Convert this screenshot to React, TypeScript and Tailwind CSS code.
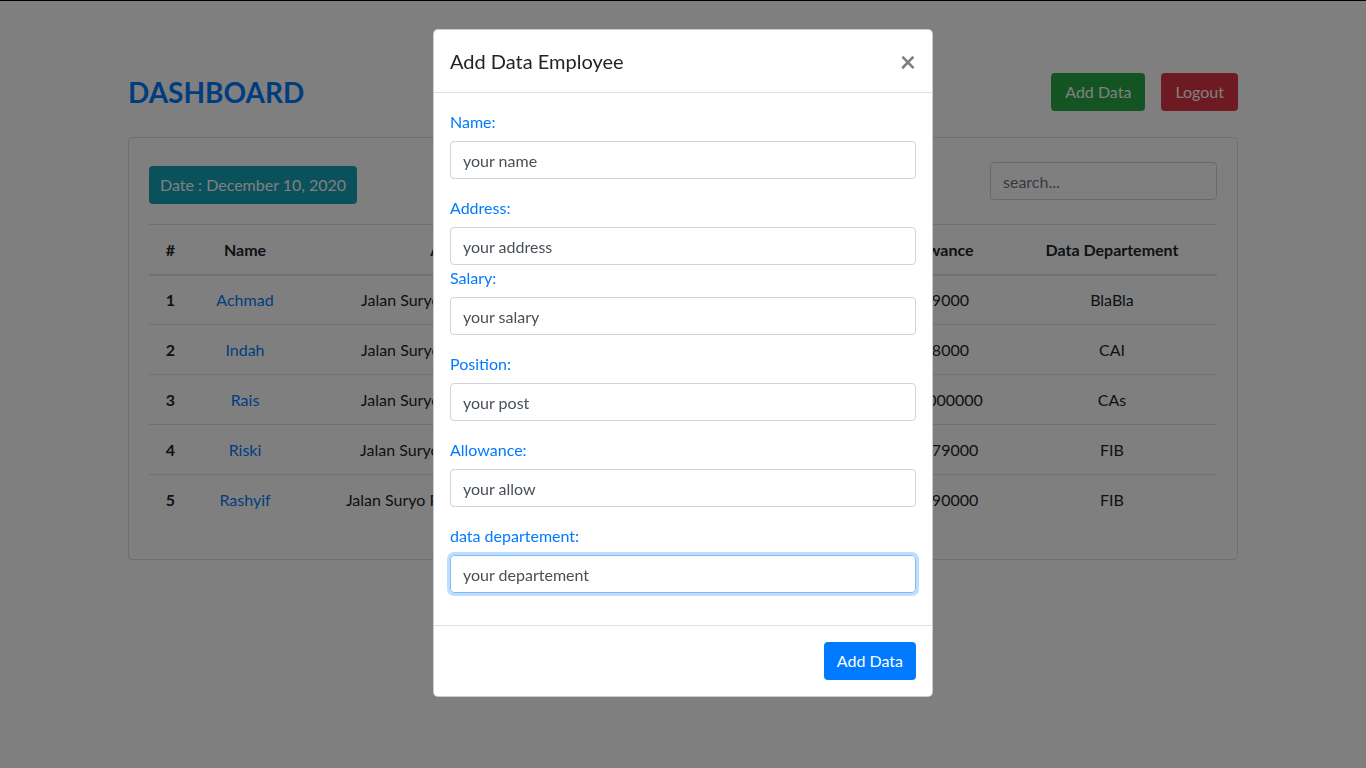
import { useState } from "react";

interface Employee {
  id: number;
  name: string;
  address: string;
  salary: string;
  position: string;
  allowance: string;
  dept: string;
}

const employees: Employee[] = [
  { id: 1, name: "Achmad", address: "Jalan Suryo No. 12 Blok A-2", salary: "5000000", position: "Manager", allowance: "1299000", dept: "BlaBla" },
  { id: 2, name: "Indah", address: "Jalan Suryo No. 14 Blok B-2", salary: "4500000", position: "Staff", allowance: "1298000", dept: "CAI" },
  { id: 3, name: "Rais", address: "Jalan Suryo No. 16 Blok C-2", salary: "4000000", position: "Staff", allowance: "1000000000", dept: "CAs" },
  { id: 4, name: "Riski", address: "Jalan Suryo No. 18 Blok D-2", salary: "3500000", position: "Admin", allowance: "117979000", dept: "FIB" },
  { id: 5, name: "Rashyif", address: "Jalan Suryo Pranoto No. 20 Blok", salary: "3000000", position: "Admin", allowance: "119890000", dept: "FIB" },
];

const fields = [
  { label: "Name:", placeholder: "your name", gap: true },
  { label: "Address:", placeholder: "your address", gap: false },
  { label: "Salary:", placeholder: "your salary", gap: true },
  { label: "Position:", placeholder: "your post", gap: true },
  { label: "Allowance:", placeholder: "your allow", gap: true },
  { label: "data departement:", placeholder: "your departement", gap: true, focus: true },
];

const App = () => {
  const [search, setSearch] = useState("");

  return (
    <div className="min-h-screen bg-white border-t border-black font-['Lato',sans-serif] text-[16px] text-[#212529]">
      <div className="mx-auto w-[1140px] px-[15px]">
        <div className="mt-[72px] flex h-[38px] items-center justify-between">
          <h2 className="text-[28px] font-bold text-[#007bff] leading-none">DASHBOARD</h2>
          <div className="flex gap-4">
            <button className="h-[38px] rounded px-[14px] bg-[#28a745] text-white">Add Data</button>
            <button className="h-[38px] rounded px-[14px] bg-[#dc3545] text-white">Logout</button>
          </div>
        </div>

        <div className="mt-[26px] rounded border border-black/[0.125] px-5 pt-6 pb-[18px]">
          <div className="flex items-start justify-between">
            <div className="mt-1 flex h-[38px] items-center rounded bg-[#17a2b8] px-[11px] text-white">
              Date : December 10, 2020
            </div>
            <input
              value={search}
              onChange={(e) => setSearch(e.target.value)}
              placeholder="search..."
              className="h-[38px] w-[227px] rounded border border-[#ced4da] px-3 text-[#495057] placeholder:text-[#6c757d] outline-none"
            />
          </div>

          <table className="mt-5 mb-4 w-full table-fixed border-collapse text-center">
            <colgroup>
              <col className="w-[43px]" />
              <col className="w-[106px]" />
              <col className="w-[322px]" />
              <col className="w-[123px]" />
              <col className="w-[123px]" />
              <col className="w-[141px]" />
              <col className="w-[210px]" />
            </colgroup>
            <thead>
              <tr className="h-[50px] border-t border-[#dee2e6] border-b-2">
                <th className="px-3 pt-[2px] font-bold">#</th>
                <th className="px-3 pt-[2px] font-bold">Name</th>
                <th className="px-3 pt-[2px] font-bold">Address</th>
                <th className="px-3 pt-[2px] font-bold">Salary</th>
                <th className="px-3 pt-[2px] font-bold">Position</th>
                <th className="px-3 pt-[2px] font-bold">Allowance</th>
                <th className="px-3 pt-[2px] font-bold">Data Departement</th>
              </tr>
            </thead>
            <tbody>
              {employees.map((emp) => (
                <tr key={emp.id} className="h-[50px] border-t border-[#dee2e6]">
                  <th className="px-3 font-bold">{emp.id}</th>
                  <td className="px-3 text-[#007bff]">{emp.name}</td>
                  <td className="px-3 whitespace-nowrap">{emp.address}</td>
                  <td className="px-3">{emp.salary}</td>
                  <td className="px-3">{emp.position}</td>
                  <td className="px-3">{emp.allowance}</td>
                  <td className="px-3">{emp.dept}</td>
                </tr>
              ))}
            </tbody>
          </table>
        </div>
      </div>

      {/* modal */}
      <div className="fixed inset-0 bg-black/50">
        <div className="mx-auto mt-[29px] w-[500px] rounded-[5px] border border-black/20 bg-white">
          <div className="flex items-start justify-between border-b border-[#dee2e6] p-4">
            <h5 className="text-[20px] leading-[30px]">Add Data Employee</h5>
            <button className="text-[28px] font-bold leading-[30px] text-black opacity-50">×</button>
          </div>
          <div className="p-4">
            {fields.map((f) => (
              <div key={f.label} className={f.gap ? "mb-4" : ""}>
                <label className="mb-2 block pt-[1px] leading-[23px] text-[#007bff]">{f.label}</label>
                <input
                  placeholder={f.placeholder}
                  className={
                    f.focus
                      ? "h-[38px] w-full rounded border border-[#80bdff] px-3 text-[#495057] placeholder:text-[#495057] shadow-[0_0_0_3px_rgba(0,123,255,0.25)] outline-none"
                      : "h-[38px] w-full rounded border border-[#ced4da] px-3 text-[#495057] placeholder:text-[#495057] outline-none"
                  }
                />
              </div>
            ))}
          </div>
          <div className="flex justify-end border-t border-[#dee2e6] p-3">
            <button className="m-1 h-[38px] rounded bg-[#007bff] px-[13px] text-white">Add Data</button>
          </div>
        </div>
      </div>
    </div>
  );
};

export default App;
